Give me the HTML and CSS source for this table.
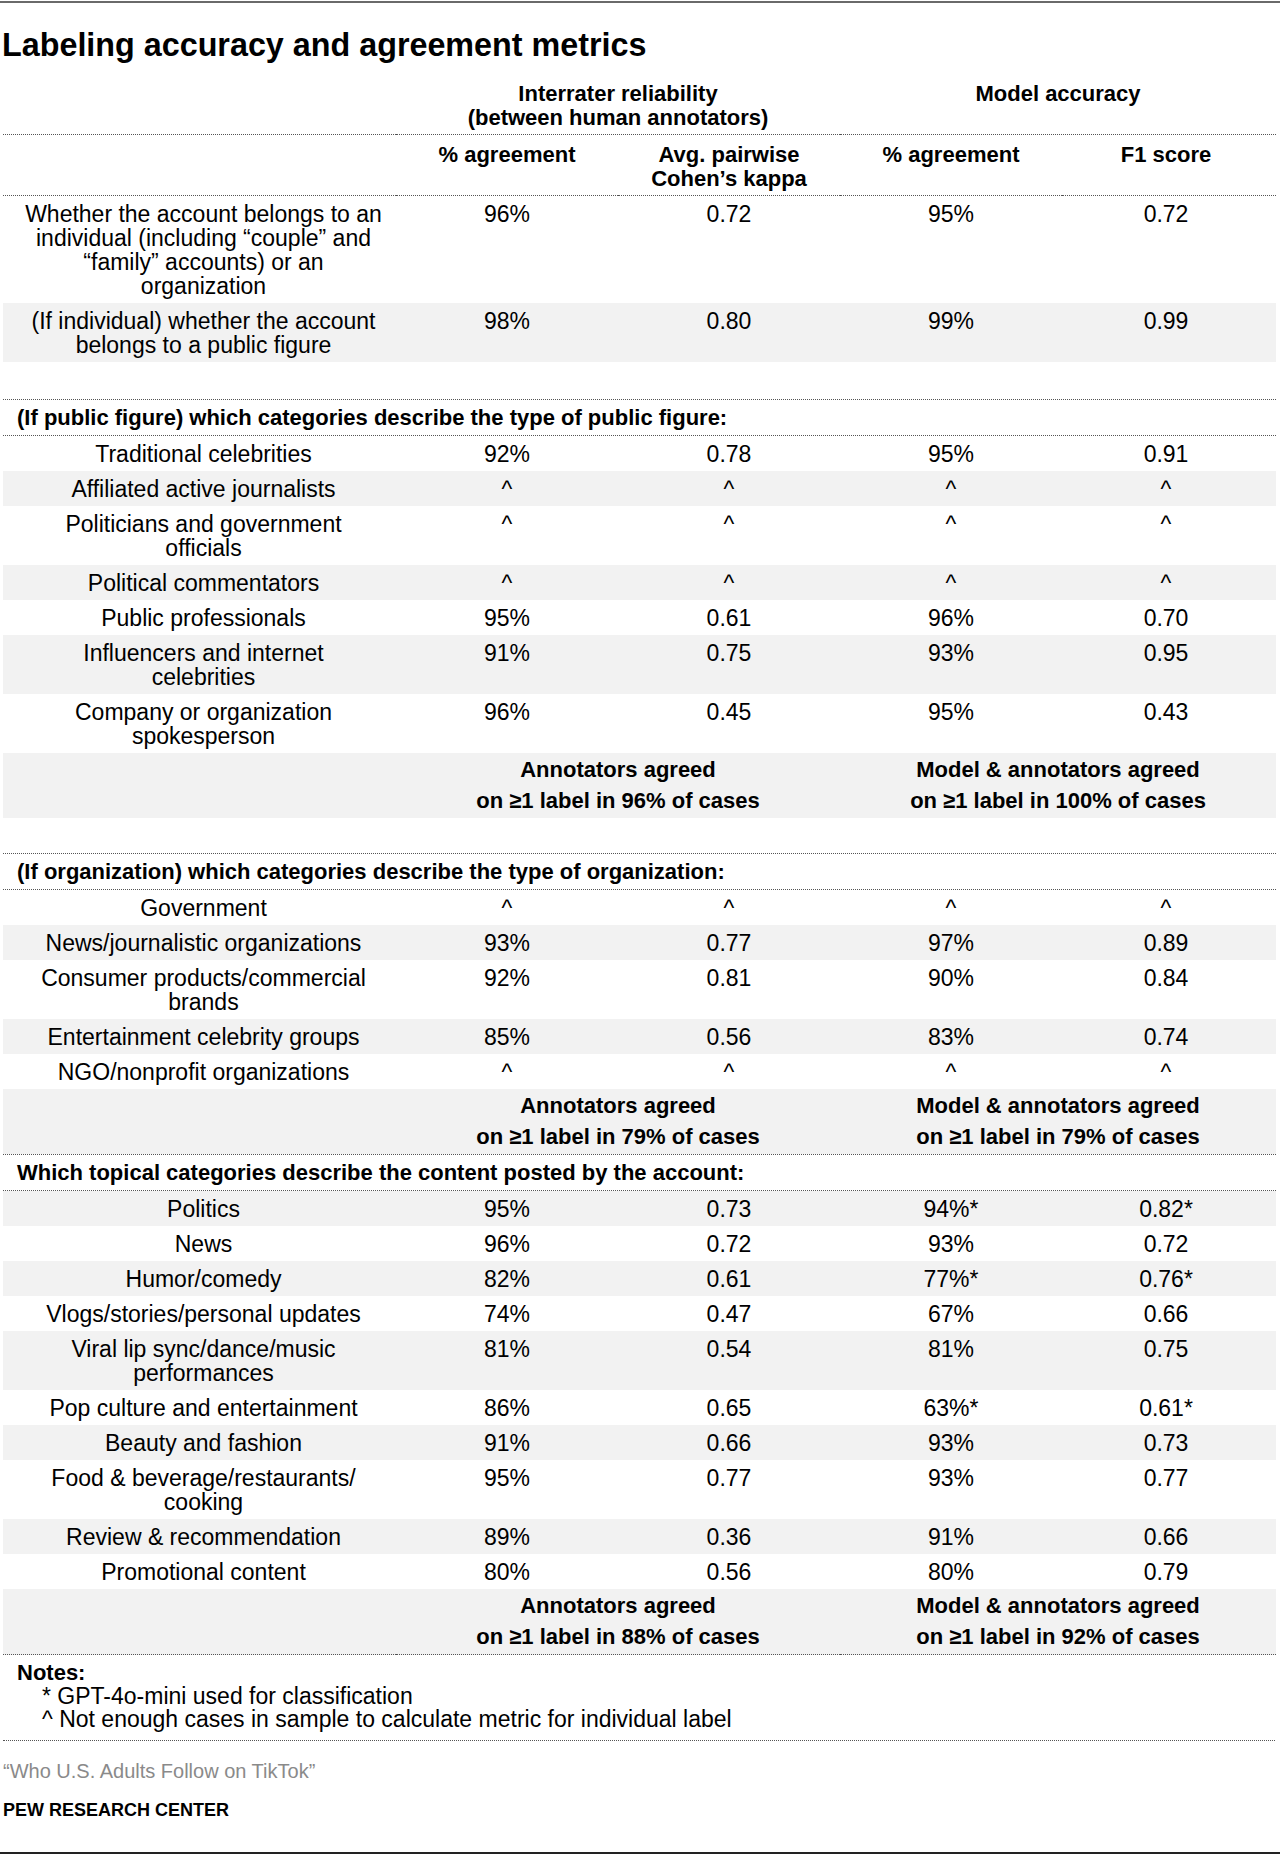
FILE: index.html
```html
<!DOCTYPE html>
<html lang="en">
<head>
<meta charset="utf-8">
<title>Labeling accuracy and agreement metrics</title>
<link rel="stylesheet" href="styles.css">
</head>
<body>
<div class="page">
  <h1 class="title">Labeling accuracy and agreement metrics</h1>
  <table class="metrics">
    <colgroup>
      <col class="col-label">
      <col class="col-num">
      <col class="col-num">
      <col class="col-num">
      <col class="col-last">
    </colgroup>
    <thead>
      <tr class="head head-top">
        <th></th>
        <th colspan="2">Interrater reliability<br>(between human annotators)</th>
        <th colspan="2">Model accuracy</th>
      </tr>
      <tr class="head">
        <th></th>
        <th>% agreement</th>
        <th>Avg. pairwise<br>Cohen’s kappa</th>
        <th>% agreement</th>
        <th>F1 score</th>
      </tr>
    </thead>
    <tbody>
      <tr>
        <td class="label">Whether the account belongs to an<br>individual (including “couple” and<br>“family” accounts) or an<br>organization</td>
        <td>96%</td><td>0.72</td><td>95%</td><td>0.72</td>
      </tr>
      <tr class="alt">
        <td class="label">(If individual) whether the account<br>belongs to a public figure</td>
        <td>98%</td><td>0.80</td><td>99%</td><td>0.99</td>
      </tr>
      <tr class="gap gap-first"><td colspan="5"></td></tr>

      <tr class="section"><th colspan="5">(If public figure) which categories describe the type of public figure:</th></tr>
      <tr>
        <td class="label">Traditional celebrities</td>
        <td>92%</td><td>0.78</td><td>95%</td><td>0.91</td>
      </tr>
      <tr class="alt">
        <td class="label">Affiliated active journalists</td>
        <td>^</td><td>^</td><td>^</td><td>^</td>
      </tr>
      <tr>
        <td class="label">Politicians and government<br>officials</td>
        <td>^</td><td>^</td><td>^</td><td>^</td>
      </tr>
      <tr class="alt">
        <td class="label">Political commentators</td>
        <td>^</td><td>^</td><td>^</td><td>^</td>
      </tr>
      <tr>
        <td class="label">Public professionals</td>
        <td>95%</td><td>0.61</td><td>96%</td><td>0.70</td>
      </tr>
      <tr class="alt">
        <td class="label">Influencers and internet<br>celebrities</td>
        <td>91%</td><td>0.75</td><td>93%</td><td>0.95</td>
      </tr>
      <tr>
        <td class="label">Company or organization<br>spokesperson</td>
        <td>96%</td><td>0.45</td><td>95%</td><td>0.43</td>
      </tr>
      <tr class="summary">
        <td></td>
        <td colspan="2">Annotators agreed<br>on ≥1 label in 96% of cases</td>
        <td colspan="2">Model &amp; annotators agreed<br>on ≥1 label in 100% of cases</td>
      </tr>
      <tr class="gap"><td colspan="5"></td></tr>

      <tr class="section"><th colspan="5">(If organization) which categories describe the type of organization:</th></tr>
      <tr>
        <td class="label">Government</td>
        <td>^</td><td>^</td><td>^</td><td>^</td>
      </tr>
      <tr class="alt">
        <td class="label">News/journalistic organizations</td>
        <td>93%</td><td>0.77</td><td>97%</td><td>0.89</td>
      </tr>
      <tr>
        <td class="label">Consumer products/commercial<br>brands</td>
        <td>92%</td><td>0.81</td><td>90%</td><td>0.84</td>
      </tr>
      <tr class="alt">
        <td class="label">Entertainment celebrity groups</td>
        <td>85%</td><td>0.56</td><td>83%</td><td>0.74</td>
      </tr>
      <tr>
        <td class="label">NGO/nonprofit organizations</td>
        <td>^</td><td>^</td><td>^</td><td>^</td>
      </tr>
      <tr class="summary">
        <td></td>
        <td colspan="2">Annotators agreed<br>on ≥1 label in 79% of cases</td>
        <td colspan="2">Model &amp; annotators agreed<br>on ≥1 label in 79% of cases</td>
      </tr>

      <tr class="section"><th colspan="5">Which topical categories describe the content posted by the account:</th></tr>
      <tr class="alt">
        <td class="label">Politics</td>
        <td>95%</td><td>0.73</td><td>94%*</td><td>0.82*</td>
      </tr>
      <tr>
        <td class="label">News</td>
        <td>96%</td><td>0.72</td><td>93%</td><td>0.72</td>
      </tr>
      <tr class="alt">
        <td class="label">Humor/comedy</td>
        <td>82%</td><td>0.61</td><td>77%*</td><td>0.76*</td>
      </tr>
      <tr>
        <td class="label">Vlogs/stories/personal updates</td>
        <td>74%</td><td>0.47</td><td>67%</td><td>0.66</td>
      </tr>
      <tr class="alt">
        <td class="label">Viral lip sync/dance/music<br>performances</td>
        <td>81%</td><td>0.54</td><td>81%</td><td>0.75</td>
      </tr>
      <tr>
        <td class="label">Pop culture and entertainment</td>
        <td>86%</td><td>0.65</td><td>63%*</td><td>0.61*</td>
      </tr>
      <tr class="alt">
        <td class="label">Beauty and fashion</td>
        <td>91%</td><td>0.66</td><td>93%</td><td>0.73</td>
      </tr>
      <tr>
        <td class="label">Food &amp; beverage/restaurants/<br>cooking</td>
        <td>95%</td><td>0.77</td><td>93%</td><td>0.77</td>
      </tr>
      <tr class="alt">
        <td class="label">Review &amp; recommendation</td>
        <td>89%</td><td>0.36</td><td>91%</td><td>0.66</td>
      </tr>
      <tr>
        <td class="label">Promotional content</td>
        <td>80%</td><td>0.56</td><td>80%</td><td>0.79</td>
      </tr>
      <tr class="summary summary-last">
        <td></td>
        <td colspan="2">Annotators agreed<br>on ≥1 label in 88% of cases</td>
        <td colspan="2">Model &amp; annotators agreed<br>on ≥1 label in 92% of cases</td>
      </tr>
    </tbody>
  </table>

  <div class="notes">
    <div class="notes-title">Notes:</div>
    <div class="notes-item">* GPT-4o-mini used for classification</div>
    <div class="notes-item">^ Not enough cases in sample to calculate metric for individual label</div>
  </div>

  <p class="source">“Who U.S. Adults Follow on TikTok”</p>
  <p class="brand">PEW RESEARCH CENTER</p>
</div>
</body>
</html>
```

FILE: styles.css
```css
html, body {
  margin: 0;
  padding: 0;
  background: #ffffff;
}

body {
  font-family: "Liberation Sans", Arial, sans-serif;
  color: #000000;
}

.page {
  margin-top: 1px;
  border-top: 2px solid #6a6a6a;
  border-bottom: 2px solid #222222;
  padding-bottom: 31px;
}

.title {
  margin: 0 0 10px 0;
  padding: 23px 0 0 2px;
  font-size: 32.3px;
  line-height: 38px;
  font-weight: 700;
}

.metrics {
  margin-left: 3px;
  width: 1273px;
  table-layout: fixed;
  border-collapse: separate;
  border-spacing: 0;
}

.col-label { width: 393px; }
.col-num { width: 222px; }
.col-last { width: 214px; }

.metrics th,
.metrics td {
  vertical-align: top;
  text-align: center;
  padding: 0;
}

.metrics td {
  font-size: 23px;
  line-height: 24px;
  font-weight: 400;
  padding: 5.5px 0;
}

.metrics td.label {
  padding-left: 8px;
}

.metrics tr > td:nth-child(5) {
  padding-right: 6px;
}

.head th {
  font-size: 22px;
  line-height: 24px;
  font-weight: 700;
  padding: 8px 0 4px;
  border-bottom: 1px dotted #555555;
}

.head th:nth-child(5) {
  padding-right: 6px;
}

.alt td {
  background: #f2f2f2;
}

.gap td {
  height: 35px;
  padding: 0;
}

.gap-first td {
  height: 37px;
}

.section th {
  text-align: left;
  font-size: 22px;
  line-height: 24px;
  font-weight: 700;
  padding: 5.5px 0 5.5px 14px;
  border-top: 1px dotted #555555;
  border-bottom: 1px dotted #555555;
}

.summary td {
  background: #f2f2f2;
  font-size: 22px;
  line-height: 30.5px;
  font-weight: 700;
  padding: 2px 0;
}

.summary-last td {
  border-bottom: 1px dotted #555555;
}

.notes {
  margin-left: 3px;
  width: 1272px;
  padding: 6px 0 8px;
  border-bottom: 1px dotted #555555;
  font-size: 23px;
  line-height: 23.5px;
}

.notes-title {
  font-size: 22px;
  font-weight: 700;
  padding-left: 14px;
}

.notes-item {
  padding-left: 39px;
}

.source {
  margin: 18px 0 0 3px;
  font-size: 20px;
  line-height: 24px;
  color: #8a8a8a;
}

.brand {
  margin: 16px 0 0 3px;
  font-size: 18px;
  line-height: 22px;
  font-weight: 700;
}
```
